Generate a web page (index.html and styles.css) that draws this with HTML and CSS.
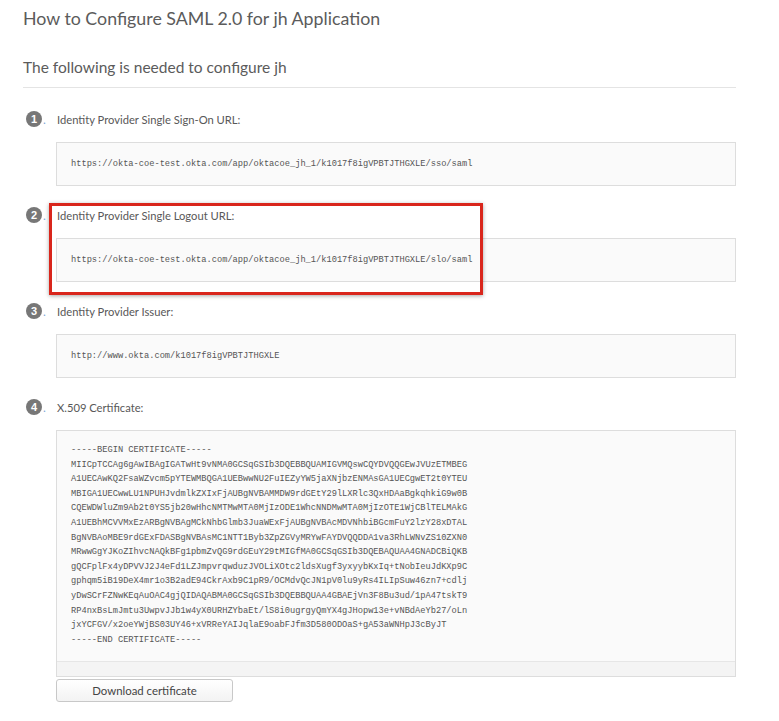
FILE: index.html
```html
<!DOCTYPE html>
<html>
<head>
<meta charset="utf-8">
<link rel="stylesheet" href="styles.css">
</head>
<body>
<div class="page">
  <h1 class="title">How to Configure SAML 2.0 for jh Application</h1>
  <h2 class="subtitle">The following is needed to configure jh</h2>
  <ol class="steps">
    <li class="step">
      <div class="label"><span class="badge">1</span><span class="dot">.</span><span class="label-text">Identity Provider Single Sign-On URL:</span></div>
      <div class="code">https://okta-coe-test.okta.com/app/oktacoe_jh_1/k1017f8igVPBTJTHGXLE/sso/saml</div>
    </li>
    <li class="step highlighted">
      <div class="label"><span class="badge">2</span><span class="dot">.</span><span class="label-text">Identity Provider Single Logout URL:</span></div>
      <div class="code">https://okta-coe-test.okta.com/app/oktacoe_jh_1/k1017f8igVPBTJTHGXLE/slo/saml</div>
      <div class="highlight"></div>
    </li>
    <li class="step">
      <div class="label"><span class="badge">3</span><span class="dot">.</span><span class="label-text">Identity Provider Issuer:</span></div>
      <div class="code">http://www.okta.com/k1017f8igVPBTJTHGXLE</div>
    </li>
    <li class="step last">
      <div class="label"><span class="badge">4</span><span class="dot">.</span><span class="label-text">X.509 Certificate:</span></div>
      <div class="cert">
        <pre class="cert-text">-----BEGIN CERTIFICATE-----
MIICpTCCAg6gAwIBAgIGATwHt9vNMA0GCSqGSIb3DQEBBQUAMIGVMQswCQYDVQQGEwJVUzETMBEG
A1UECAwKQ2FsaWZvcm5pYTEWMBQGA1UEBwwNU2FuIEZyYW5jaXNjbzENMAsGA1UECgwET2t0YTEU
MBIGA1UECwwLU1NPUHJvdmlkZXIxFjAUBgNVBAMMDW9rdGEtY29lLXRlc3QxHDAaBgkqhkiG9w0B
CQEWDWluZm9Ab2t0YS5jb20wHhcNMTMwMTA0MjIzODE1WhcNNDMwMTA0MjIzOTE1WjCBlTELMAkG
A1UEBhMCVVMxEzARBgNVBAgMCkNhbGlmb3JuaWExFjAUBgNVBAcMDVNhbiBGcmFuY2lzY28xDTAL
BgNVBAoMBE9rdGExFDASBgNVBAsMC1NTT1Byb3ZpZGVyMRYwFAYDVQQDDA1va3RhLWNvZS10ZXN0
MRwwGgYJKoZIhvcNAQkBFg1pbmZvQG9rdGEuY29tMIGfMA0GCSqGSIb3DQEBAQUAA4GNADCBiQKB
gQCFplFx4yDPVVJ2J4eFd1LZJmpvrqwduzJVOLiXOtc2ldsXugf3yxyybKxIq+tNobIeuJdKXp9C
gphqm5iB19DeX4mr1o3B2adE94CkrAxb9C1pR9/OCMdvQcJN1pV0lu9yRs4ILIpSuw46zn7+cdlj
yDwSCrFZNwKEqAuOAC4gjQIDAQABMA0GCSqGSIb3DQEBBQUAA4GBAEjVn3F8Bu3ud/1pA47tskT9
RP4nxBsLmJmtu3UwpvJJb1w4yX0URHZYbaEt/lS8i0ugrgyQmYX4gJHopw13e+vNBdAeYb27/oLn
jxYCFGV/x2oeYWjBS03UY46+xVRReYAIJqlaE9oabFJfm3D580ODOaS+gA53aWNHpJ3cByJT
-----END CERTIFICATE-----</pre>
        <div class="scrollbar"></div>
      </div>
      <button class="btn">Download certificate</button>
    </li>
  </ol>
</div>
</body>
</html>
```

FILE: styles.css
```css
html, body {
  margin: 0;
  padding: 0;
  background: #ffffff;
}

body {
  font-family: Lato, "Open Sans", "Liberation Sans", sans-serif;
  color: #5a5a5a;
}

.page {
  width: 713px;
  padding: 0 0 0 23px;
}

.title {
  margin: 0;
  padding-top: 6px;
  height: 26px;
  line-height: 24px;
  font-size: 17.8px;
  font-weight: 400;
  color: #5b5b5b;
}

.subtitle {
  margin: 0;
  padding-top: 25px;
  padding-bottom: 10px;
  line-height: 20px;
  font-size: 15.5px;
  font-weight: 400;
  color: #5b5b5b;
  border-bottom: 1px solid #e4e4e4;
}

.steps {
  list-style: none;
  margin: 0;
  padding: 21px 0 0 0;
}

.step {
  position: relative;
  margin-bottom: 19px;
}

.step.last {
  margin-bottom: 0;
}

.label {
  display: flex;
  align-items: center;
  height: 20px;
  margin-bottom: 13px;
  font-size: 11.2px;
  color: #585858;
}

.badge {
  display: flex;
  align-items: center;
  justify-content: center;
  width: 16px;
  height: 16px;
  margin-left: 3px;
  border-radius: 50%;
  background: #777777;
  color: #ffffff;
  font-size: 11px;
  font-weight: 700;
  font-family: "Liberation Sans", Arial, sans-serif;
}

.dot {
  width: 14px;
  margin-left: 1px;
  color: #7fa7d6;
  font-size: 12px;
}

.label-text {
  white-space: nowrap;
}

.code {
  margin-left: 33px;
  padding: 14px;
  line-height: 14px;
  background: #fafafa;
  border: 1px solid #dddddd;
  font-family: "Liberation Mono", "DejaVu Sans Mono", monospace;
  font-size: 8.7px;
  color: #555555;
  white-space: pre;
}

.highlight {
  position: absolute;
  left: 26px;
  top: -2px;
  width: 428px;
  height: 86px;
  border: 3px solid #d9261c;
  box-shadow: 0 1px 4px rgba(0, 0, 0, 0.35);
  pointer-events: none;
}

.cert {
  margin-left: 33px;
  background: #fafafa;
  border: 1px solid #dddddd;
}

.cert-text {
  margin: 0;
  padding: 12px 14px 14px 14px;
  line-height: 14.6px;
  font-family: "Liberation Mono", "DejaVu Sans Mono", monospace;
  font-size: 8.7px;
  color: #555555;
}

.scrollbar {
  height: 14px;
  background: #f4f4f4;
  border-top: 1px solid #e6e6e6;
}

.btn {
  display: block;
  margin: 2px 0 0 33px;
  width: 177px;
  height: 23px;
  padding: 0;
  border: 1px solid #c8c8c8;
  border-radius: 3px;
  background: linear-gradient(#ffffff, #f3f3f3);
  font-family: Lato, "Open Sans", "Liberation Sans", sans-serif;
  font-size: 11.4px;
  color: #444444;
}
```
